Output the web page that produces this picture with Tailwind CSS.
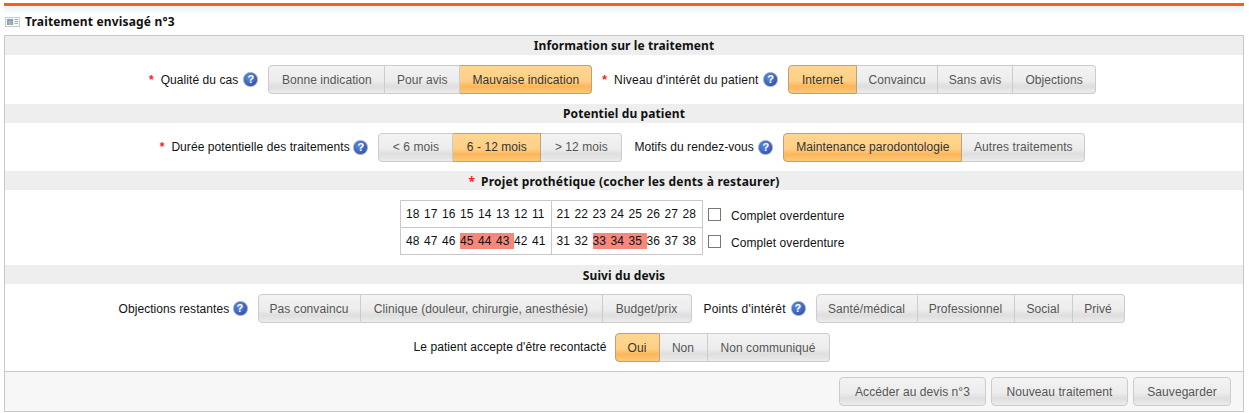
<!DOCTYPE html>
<html lang="fr">
<head>
<meta charset="UTF-8">
<title>Traitement</title>
<script src="https://cdn.jsdelivr.net/npm/@tailwindcss/browser@4"></script>
</head>
<body class="bg-white font-['Liberation_Sans',sans-serif] text-[12px] tracking-[0.07px] text-[#111]">
<div class="w-[1244px] h-[413px] overflow-hidden pl-[4px] pt-[3px]">
  <div class="h-[3px] bg-[#f26411]"></div>
  <div class="h-[29px] flex items-center gap-[5px] pl-[1px] pt-[2px] bg-gradient-to-b from-[#e6f1fa] to-white to-[30%]">
    <svg width="15" height="10" viewBox="0 0 15 10"><rect x="0.5" y="0.5" width="14" height="9" fill="#f4f7fb" stroke="#c2cedb"/><rect x="2" y="2" width="6" height="6" fill="#6fa6e6"/><rect x="3.5" y="4" width="3" height="4" fill="#eda45e"/><path d="M9.5 2.5h3.5M9.5 4.5h3.5M9.5 6.5h3.5" stroke="#9fb0c4"/></svg>
    <span class="font-bold font-['Noto_Sans'] tracking-[0.17px] text-[#111]">Traitement envisagé n°3</span>
  </div>
  <div class="w-[1240px] h-[377px] border border-[#c8c8c8] flex flex-col">
    <h3 class="h-[19px] bg-[#eeeeee] font-bold font-['Noto_Sans'] tracking-[0.1px] text-center leading-[19px]">Information sur le traitement</h3>
    <div class="h-[49px] pr-[3px] flex items-center justify-center">
      <span class="text-[#ff2020] font-bold mr-[7px]">*</span><span>Qualité du cas</span>
      <span class="ml-[5px] mr-[10px] w-[15px] h-[15px] rounded-full border border-[#9aa4b5] bg-[radial-gradient(circle_at_40%_35%,#5f8fe0,#1f3fa8)] text-white text-[11px] font-bold leading-[13px] text-center">?</span>
      <div class="flex">
        <button class="h-[29px] w-[117px] border border-[#cccccc] rounded-l-[4px] bg-[linear-gradient(#f3f3f3,#ececec_55%,#dedede_75%,#ececec)] text-[#555]">Bonne indication</button>
        <button class="h-[29px] w-[75px] border border-l-0 border-[#cccccc] bg-[linear-gradient(#f3f3f3,#ececec_55%,#dedede_75%,#ececec)] text-[#555]">Pour avis</button>
        <button class="h-[29px] w-[132px] border border-l-0 border-[#b9a27c] rounded-r-[4px] bg-[linear-gradient(#ffd692,#ffcf85_55%,#fcb65a_75%,#fdc878)] text-[#333]">Mauvaise indication</button>
      </div>
      <span class="text-[#ff2020] font-bold ml-[10px] mr-[7px]">*</span><span class="w-[144px] whitespace-nowrap tracking-[0.2px]">Niveau d'intérêt du patient</span>
      <span class="ml-[5px] mr-[10px] w-[15px] h-[15px] rounded-full border border-[#9aa4b5] bg-[radial-gradient(circle_at_40%_35%,#5f8fe0,#1f3fa8)] text-white text-[11px] font-bold leading-[13px] text-center">?</span>
      <div class="flex">
        <button class="h-[29px] w-[69px] border border-[#b9a27c] rounded-l-[4px] bg-[linear-gradient(#ffd692,#ffcf85_55%,#fcb65a_75%,#fdc878)] text-[#333]">Internet</button>
        <button class="h-[29px] w-[81px] border border-l-0 border-[#cccccc] bg-[linear-gradient(#f3f3f3,#ececec_55%,#dedede_75%,#ececec)] text-[#555]">Convaincu</button>
        <button class="h-[29px] w-[75px] border border-l-0 border-[#cccccc] bg-[linear-gradient(#f3f3f3,#ececec_55%,#dedede_75%,#ececec)] text-[#555]">Sans avis</button>
        <button class="h-[29px] w-[83px] border border-l-0 border-[#cccccc] rounded-r-[4px] bg-[linear-gradient(#f3f3f3,#ececec_55%,#dedede_75%,#ececec)] text-[#555]">Objections</button>
      </div>
    </div>
    <h3 class="h-[19px] bg-[#eeeeee] font-bold font-['Noto_Sans'] tracking-[0.1px] text-center leading-[19px]">Potentiel du patient</h3>
    <div class="h-[48px] pr-[3px] flex items-center justify-center">
      <span class="text-[#ff2020] font-bold mr-[7px]">*</span><span class="w-[177px] whitespace-nowrap">Durée potentielle des traitements</span>
      <span class="ml-[5px] mr-[10px] w-[15px] h-[15px] rounded-full border border-[#9aa4b5] bg-[radial-gradient(circle_at_40%_35%,#5f8fe0,#1f3fa8)] text-white text-[11px] font-bold leading-[13px] text-center">?</span>
      <div class="flex">
        <button class="h-[29px] w-[75px] border border-[#cccccc] rounded-l-[4px] bg-[linear-gradient(#f3f3f3,#ececec_55%,#dedede_75%,#ececec)] text-[#555]">&lt; 6 mois</button>
        <button class="h-[29px] w-[88px] border border-l-0 border-[#b9a27c] bg-[linear-gradient(#ffd692,#ffcf85_55%,#fcb65a_75%,#fdc878)] text-[#333]">6 - 12 mois</button>
        <button class="h-[29px] w-[81px] border border-l-0 border-[#cccccc] rounded-r-[4px] bg-[linear-gradient(#f3f3f3,#ececec_55%,#dedede_75%,#ececec)] text-[#555]">&gt; 12 mois</button>
      </div>
      <span class="ml-[12px] w-[119px] whitespace-nowrap">Motifs du rendez-vous</span>
      <span class="ml-[5px] mr-[10px] w-[15px] h-[15px] rounded-full border border-[#9aa4b5] bg-[radial-gradient(circle_at_40%_35%,#5f8fe0,#1f3fa8)] text-white text-[11px] font-bold leading-[13px] text-center">?</span>
      <div class="flex">
        <button class="h-[29px] w-[179px] border border-[#b9a27c] rounded-l-[4px] bg-[linear-gradient(#ffd692,#ffcf85_55%,#fcb65a_75%,#fdc878)] text-[#333]">Maintenance parodontologie</button>
        <button class="h-[29px] w-[123px] border border-l-0 border-[#cccccc] rounded-r-[4px] bg-[linear-gradient(#f3f3f3,#ececec_55%,#dedede_75%,#ececec)] text-[#555]">Autres traitements</button>
      </div>
    </div>
    <h3 class="h-[19px] bg-[#eeeeee] font-bold font-['Noto_Sans'] tracking-[0.2px] text-center leading-[21px]"><span class="text-[#ff2020] mr-[6px]">*</span>Projet prothétique (cocher les dents à restaurer)</h3>
    <div class="h-[75px] pl-[395px] pt-[10px] flex gap-[5px]">
      <div class="w-[303px] h-[55px] border border-[#c8c8c8] grid grid-cols-2 grid-rows-2">
        <div class="border-r border-b border-[#c8c8c8] flex items-center pl-[5px] pt-[1px] [&>span]:w-[18px] [&>span]:leading-[16px]"><span>18</span><span>17</span><span>16</span><span>15</span><span>14</span><span>13</span><span>12</span><span>11</span></div>
        <div class="border-b border-[#c8c8c8] flex items-center pl-[5px] pt-[1px] [&>span]:w-[18px] [&>span]:leading-[16px]"><span>21</span><span>22</span><span>23</span><span>24</span><span>25</span><span>26</span><span>27</span><span>28</span></div>
        <div class="border-r border-[#c8c8c8] flex items-center pl-[5px] pt-[1px] [&>span]:w-[18px] [&>span]:leading-[16px]"><span>48</span><span>47</span><span>46</span><span class="bg-[#f8877a]">45</span><span class="bg-[#f8877a]">44</span><span class="bg-[#f8877a]">43</span><span>42</span><span>41</span></div>
        <div class="flex items-center pl-[5px] pt-[1px] [&>span]:w-[18px] [&>span]:leading-[16px]"><span>31</span><span>32</span><span class="bg-[#f8877a]">33</span><span class="bg-[#f8877a]">34</span><span class="bg-[#f8877a]">35</span><span>36</span><span>37</span><span>38</span></div>
      </div>
      <div class="flex flex-col pt-[1px]">
        <div class="h-[27px] flex items-center gap-[10px]"><span class="w-[13px] h-[13px] border border-[#777] bg-white"></span><span class="pt-[2px]">Complet overdenture</span></div>
        <div class="h-[27px] flex items-center gap-[10px]"><span class="w-[13px] h-[13px] border border-[#777] bg-white"></span><span class="pt-[2px]">Complet overdenture</span></div>
      </div>
    </div>
    <h3 class="h-[19px] bg-[#eeeeee] font-bold font-['Noto_Sans'] tracking-[0.1px] text-center leading-[21px]">Suivi du devis</h3>
    <div class="h-[49px] pr-[5px] flex items-center justify-center">
      <span class="w-[109px] whitespace-nowrap">Objections restantes</span>
      <span class="ml-[5px] mr-[10px] w-[15px] h-[15px] rounded-full border border-[#9aa4b5] bg-[radial-gradient(circle_at_40%_35%,#5f8fe0,#1f3fa8)] text-white text-[11px] font-bold leading-[13px] text-center">?</span>
      <div class="flex">
        <button class="h-[29px] w-[103px] border border-[#cccccc] rounded-l-[4px] bg-[linear-gradient(#f3f3f3,#ececec_55%,#dedede_75%,#ececec)] text-[#555]">Pas convaincu</button>
        <button class="h-[29px] w-[242px] border border-l-0 border-[#cccccc] bg-[linear-gradient(#f3f3f3,#ececec_55%,#dedede_75%,#ececec)] text-[#555]">Clinique (douleur, chirurgie, anesthésie)</button>
        <button class="h-[29px] w-[89px] border border-l-0 border-[#cccccc] rounded-r-[4px] bg-[linear-gradient(#f3f3f3,#ececec_55%,#dedede_75%,#ececec)] text-[#555]">Budget/prix</button>
      </div>
      <span class="ml-[12px] w-[82px] whitespace-nowrap tracking-[0.2px]">Points d'intérêt</span>
      <span class="ml-[5px] mr-[10px] w-[15px] h-[15px] rounded-full border border-[#9aa4b5] bg-[radial-gradient(circle_at_40%_35%,#5f8fe0,#1f3fa8)] text-white text-[11px] font-bold leading-[13px] text-center">?</span>
      <div class="flex">
        <button class="h-[29px] w-[102px] border border-[#cccccc] rounded-l-[4px] bg-[linear-gradient(#f3f3f3,#ececec_55%,#dedede_75%,#ececec)] text-[#555]">Santé/médical</button>
        <button class="h-[29px] w-[97px] border border-l-0 border-[#cccccc] bg-[linear-gradient(#f3f3f3,#ececec_55%,#dedede_75%,#ececec)] text-[#555]">Professionnel</button>
        <button class="h-[29px] w-[58px] border border-l-0 border-[#cccccc] bg-[linear-gradient(#f3f3f3,#ececec_55%,#dedede_75%,#ececec)] text-[#555]">Social</button>
        <button class="h-[29px] w-[52px] border border-l-0 border-[#cccccc] rounded-r-[4px] bg-[linear-gradient(#f3f3f3,#ececec_55%,#dedede_75%,#ececec)] text-[#555]">Privé</button>
      </div>
    </div>
    <div class="h-[38px] pr-[5px] flex items-start justify-center">
      <span class="mr-[8px] w-[193px] text-right whitespace-nowrap leading-[29px]">Le patient accepte d'être recontacté</span>
      <div class="flex">
        <button class="h-[29px] w-[45px] border border-[#b9a27c] rounded-l-[4px] bg-[linear-gradient(#ffd692,#ffcf85_55%,#fcb65a_75%,#fdc878)] text-[#333]">Oui</button>
        <button class="h-[29px] w-[48px] border border-l-0 border-[#cccccc] bg-[linear-gradient(#f3f3f3,#ececec_55%,#dedede_75%,#ececec)] text-[#555]">Non</button>
        <button class="h-[29px] w-[122px] border border-l-0 border-[#cccccc] rounded-r-[4px] bg-[linear-gradient(#f3f3f3,#ececec_55%,#dedede_75%,#ececec)] text-[#555]">Non communiqué</button>
      </div>
    </div>
    <div class="flex-1 border-t border-[#c8c8c8] bg-[#f7f7f7] flex items-center justify-end gap-[5px] pr-[12px]">
      <button class="h-[29px] w-[147px] border border-[#cccccc] rounded-[4px] bg-[linear-gradient(#f3f3f3,#ececec_55%,#dedede_75%,#ececec)] text-[#555]">Accéder au devis n°3</button>
      <button class="h-[29px] w-[137px] border border-[#cccccc] rounded-[4px] bg-[linear-gradient(#f3f3f3,#ececec_55%,#dedede_75%,#ececec)] text-[#555]">Nouveau traitement</button>
      <button class="h-[29px] w-[98px] border border-[#cccccc] rounded-[4px] bg-[linear-gradient(#f3f3f3,#ececec_55%,#dedede_75%,#ececec)] text-[#555]">Sauvegarder</button>
    </div>
  </div>
</div>
</body>
</html>
